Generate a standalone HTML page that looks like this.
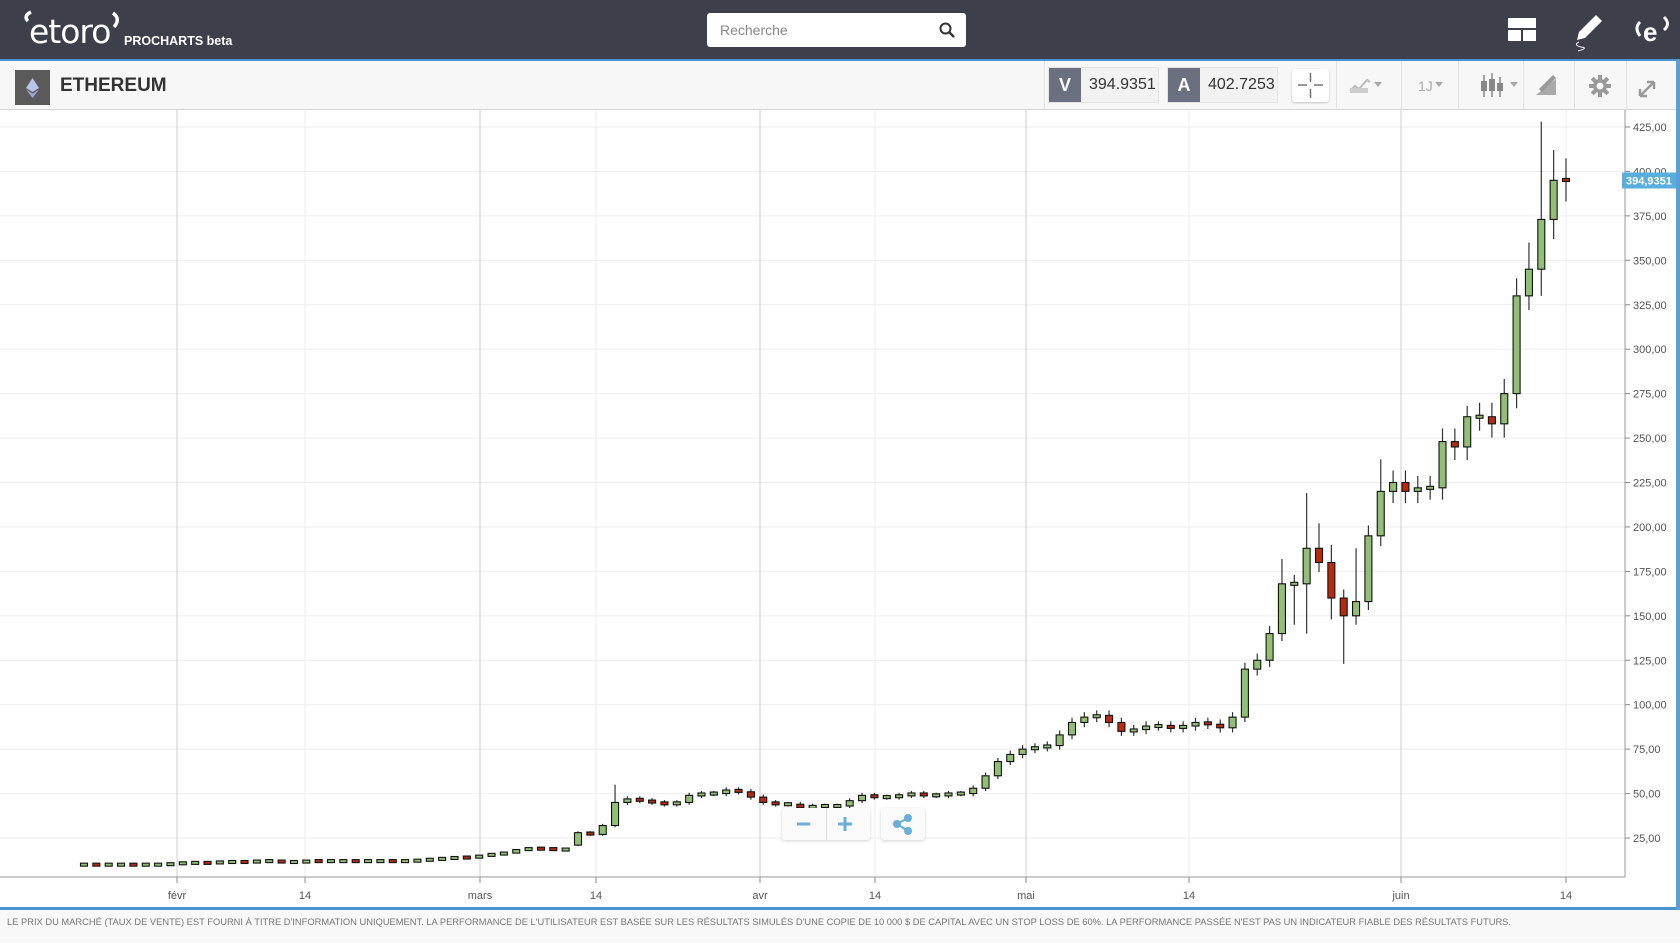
<!DOCTYPE html>
<html><head><meta charset="utf-8">
<style>
*{margin:0;padding:0;box-sizing:border-box}
html,body{width:1680px;height:943px;overflow:hidden;background:#fff;font-family:"Liberation Sans",sans-serif}
#hdr{position:absolute;left:0;top:0;width:1680px;height:60px;background:#3d3f4b}
#blue{position:absolute;left:0;top:59px;width:1680px;height:2px;background:#4a94cf}
#rb{position:absolute;left:1676px;top:60px;width:4px;height:850px;background:#5a9fd6}
#tb{position:absolute;left:0;top:61px;width:1676px;height:49px;background:#f7f7f7;border-bottom:1px solid #d4d4d4}
.search{position:absolute;left:707px;top:13px;width:259px;height:34px;background:#fff;border-radius:3px;font-size:14px;color:#888;padding:9px 13px}
.pbox{position:absolute;top:6px;height:36px;background:#f2f2f2;border:1px solid #e4e4e4;font-size:16px;color:#333}
.pbox b{position:absolute;left:0;top:0;width:32px;height:34px;background:#6b7080;color:#fff;font-size:18px;text-align:center;line-height:34px}
.pbox span{position:absolute;left:40px;top:8px}
.sep{position:absolute;top:0;width:1px;height:49px;background:#e2e2e2}
#foot{position:absolute;left:0;top:907px;width:1676px;height:3px;background:#4a94cf}
#fbg{position:absolute;left:0;top:910px;width:1680px;height:33px;background:#f8f8f8}
</style></head><body>
<div id="hdr">
  <svg width="240" height="60" style="position:absolute;left:0;top:0">
    <text x="29" y="43" font-family="DejaVu Sans" font-size="33" fill="#fff" letter-spacing="-1">etoro</text>
    <path d="M28 21 q-5 -5 3 -9" stroke="#fff" stroke-width="3.5" fill="none"/>
    <path d="M113 13 q8 6 1 14" stroke="#fff" stroke-width="3.5" fill="none"/>
    <text x="124" y="45" font-family="Liberation Sans" font-size="12.5" font-weight="bold" fill="#fff">PROCHARTS beta</text>
  </svg>
  <div class="search">Recherche
    <svg width="16" height="16" style="position:absolute;right:11px;top:9px"><circle cx="6.5" cy="6.5" r="5" stroke="#333" stroke-width="2" fill="none"/><path d="M10 10 L15 15" stroke="#333" stroke-width="2.4"/></svg>
  </div>
  <svg width="180" height="60" style="position:absolute;left:1500px;top:0">
    <rect x="8" y="18" width="28" height="10" fill="#fff"/>
    <rect x="8" y="30" width="13" height="11" fill="#fff"/><rect x="23" y="30" width="13" height="11" fill="#fff"/>
    <path d="M96 15 l6 6 l-17 17 l-8 2 l2 -8 z" fill="#fff"/>
    <path d="M79 42 q-6 3 2 5 q8 1 -3 4" stroke="#fff" stroke-width="1" fill="none"/>
    <text x="143" y="41" font-family="Liberation Sans" font-size="26" font-weight="bold" fill="#fff">e</text>
    <path d="M140 22 q-6 6 0 14" stroke="#fff" stroke-width="3" fill="none"/>
    <path d="M164 17 q7 7 0 13" stroke="#fff" stroke-width="3" fill="none"/>
  </svg>
</div>
<div id="blue"></div>
<div id="tb">
  <div style="position:absolute;left:15px;top:9px;width:35px;height:35px;background:#5a5a5a">
    <svg width="35" height="35"><path d="M17.5 8 L24 18 L17.5 22 L11 18Z" fill="#b9c2e8"/><path d="M17.5 23.5 L24 19.5 L17.5 28 L11 19.5Z" fill="#9aa4d6"/></svg>
  </div>
  <div style="position:absolute;left:60px;top:14px;font-size:19px;font-weight:bold;color:#333">ETHEREUM</div>
  <div class="sep" style="left:1044px"></div>
  <div class="pbox" style="left:1048px;width:111px"><b>V</b><span>394.9351</span></div>
  <div class="pbox" style="left:1167px;width:111px"><b>A</b><span>402.7253</span></div>
  <div style="position:absolute;left:1292px;top:8px;width:37px;height:33px;background:#fff;border-radius:3px;box-shadow:0 1px 2px rgba(0,0,0,.2)">
    <svg width="37" height="33"><path d="M6 16h9M22 16h9M18.5 4v9M18.5 20v9" stroke="#777" stroke-width="1.5"/></svg></div>
  <div class="sep" style="left:1336px"></div><div class="sep" style="left:1401px"></div><div class="sep" style="left:1458px"></div>
  <div class="sep" style="left:1523px"></div><div class="sep" style="left:1574px"></div><div class="sep" style="left:1626px"></div>
  <svg width="340" height="49" style="position:absolute;left:1336px;top:0">
    <path d="M14 30 l5 -5 l4 3 l8 -9 l3 2" stroke="#bbb" stroke-width="2" fill="none"/><rect x="14" y="27" width="18" height="5" fill="#ccc"/>
    <path d="M38 21 h8 l-4 5z" fill="#aaa"/>
    <text x="82" y="30" font-size="14" fill="#aaa" font-family="Liberation Sans">1J</text><path d="M99 21 h8 l-4 5z" fill="#aaa"/>
    <path d="M148 14 v22 M156 12 v24 M164 16 v20" stroke="#888" stroke-width="1.5"/>
    <rect x="145" y="20" width="6" height="10" fill="#888"/><rect x="153" y="18" width="6" height="12" fill="#888"/><rect x="161" y="22" width="6" height="8" fill="#888"/>
    <path d="M174 21 h8 l-4 5z" fill="#aaa"/>
    <path d="M200 34 l20 -16 v16z" fill="#aaa"/><path d="M203 28 l14 -14 l3 3 l-14 14z" fill="#999"/>
    <g transform="translate(264 25)" fill="#999"><circle r="7"/><rect x="-2" y="-11" width="4" height="22"/><rect x="-2" y="-11" width="4" height="22" transform="rotate(45)"/><rect x="-2" y="-11" width="4" height="22" transform="rotate(90)"/><rect x="-2" y="-11" width="4" height="22" transform="rotate(135)"/><circle r="3.5" fill="#f7f7f7"/></g>
    <path d="M304 35 l14 -14 M304 35 v-7 M304 35 h7 M318 21 v7 M318 21 h-7" stroke="#999" stroke-width="2.5" fill="none"/>
  </svg>
</div>
<svg id="ch" width="1676" height="797" style="position:absolute;left:0;top:110px"></svg>
<div id="rb"></div>
<div style="position:absolute;left:782px;top:808px;width:88px;height:32px;background:#fafafa;border-radius:3px;box-shadow:0 1px 3px rgba(0,0,0,.18)">
  <div style="position:absolute;left:44px;top:0;width:1px;height:32px;background:#ddd"></div>
  <svg width="88" height="32"><path d="M15 16h13" stroke="#6aaedb" stroke-width="3"/><path d="M56 16h14M63 9v14" stroke="#6aaedb" stroke-width="3"/></svg>
</div>
<div style="position:absolute;left:881px;top:808px;width:44px;height:32px;background:#fafafa;border-radius:3px;box-shadow:0 1px 3px rgba(0,0,0,.18)">
  <svg width="44" height="32"><circle cx="16" cy="16" r="4" fill="#6aaedb"/><circle cx="27" cy="10" r="4" fill="#6aaedb"/><circle cx="27" cy="23" r="4" fill="#6aaedb"/><path d="M16 16L27 10M16 16L27 23" stroke="#6aaedb" stroke-width="2"/></svg>
</div>
<div id="foot"></div>
<div id="fbg"><svg width="1680" height="33"><text x="7" y="15" font-size="9.5" fill="#777" font-family="Liberation Sans" textLength="1504" lengthAdjust="spacingAndGlyphs">LE PRIX DU MARCHÉ (TAUX DE VENTE) EST FOURNI À TITRE D'INFORMATION UNIQUEMENT. LA PERFORMANCE DE L'UTILISATEUR EST BASÉE SUR LES RÉSULTATS SIMULÉS D'UNE COPIE DE 10 000 $ DE CAPITAL AVEC UN STOP LOSS DE 60%. LA PERFORMANCE PASSÉE N'EST PAS UN INDICATEUR FIABLE DES RÉSULTATS FUTURS.</text></svg></div>
<script>
(function(){
var s=document.getElementById('ch'),h='';
var T=110;function Y(p){return 127-T+(425-p)*1.7775;}
for(var p=25;p<=425;p+=25){var y=Y(p);h+='<line x1="0" x2="1625" y1="'+y+'" y2="'+y+'" stroke="#eeeeee"/>';
h+='<line x1="1625" x2="1630" y1="'+y+'" y2="'+y+'" stroke="#888"/>';
h+='<text x="1633" y="'+(y+4)+'" font-size="11" fill="#555" font-family="Liberation Sans">'+p+',00</text>';}
var maj=[[177,'févr'],[480,'mars'],[760,'avr'],[1026,'mai'],[1401,'juin']],mn=[305,596,875,1189,1566];
maj.forEach(function(m){h+='<line x1="'+m[0]+'" x2="'+m[0]+'" y1="0" y2="767" stroke="#cccccc"/><line x1="'+m[0]+'" x2="'+m[0]+'" y1="767" y2="773" stroke="#888"/><text x="'+m[0]+'" y="789" font-size="11" fill="#555" text-anchor="middle" font-family="Liberation Sans">'+m[1]+'</text>';});
mn.forEach(function(x){h+='<line x1="'+x+'" x2="'+x+'" y1="0" y2="767" stroke="#eeeeee"/><line x1="'+x+'" x2="'+x+'" y1="767" y2="773" stroke="#888"/><text x="'+x+'" y="789" font-size="11" fill="#555" text-anchor="middle" font-family="Liberation Sans">14</text>';});
h+='<line x1="1625" x2="1625" y1="0" y2="767" stroke="#999"/><line x1="0" x2="1625" y1="767" y2="767" stroke="#999"/>';
var c=[10,10,10,10,10,10,10,10.5,11,11,11,11.5,11.5,11.5,12,12,11.5,11.5,12,12,12,12,12,12,12,12,12,12.5,13,13.5,14,14,15,16,16.5,18.5,19,19,18.5,18.5,
28,27,32,45,47,46,45,44,45,49,50,50,52,51,48,45,44,44,42,43,43,43,46,49,48,48,49,50,49,49,50,50,53,60,68,72,75,76,77,83,90,93,94,90,85,86,88,88,87,88,90,89,87,93,120,125,140,168,168,188,180,160,150,158,195,220,225,220,222,222,248,245,262,262,258,275,330,345,373,395,395];
var HI={43:55,97:182,99:219,100:202,101:190,103:188,105:238,112:268,117:360,118:428,119:412},LO={99:140,101:148,102:123,103:145,117:322,118:330,119:362,98:145};
for(var i=0;i<c.length;i++){
 var x=84+i*12.35,o=i?c[i-1]:c[0],cl=c[i];
 if(i==40)o=21;
 if(i==120){o=395.5;cl=394.9;}
 var red=cl<o||(i%3==1&&i<40&&cl==o);
 var top=Y(Math.max(o,cl)),bot=Y(Math.min(o,cl));if(bot-top<3){var m=(top+bot)/2;top=m-1.5;bot=m+1.5;}
 var hi=HI[i]||Math.max(o,cl)*1.03,lo=LO[i]||Math.min(o,cl)*0.97;
 if(i>=40)h+='<line x1="'+x+'" x2="'+x+'" y1="'+Y(hi)+'" y2="'+Y(lo)+'" stroke="#333" stroke-width="1.2"/>';
 h+='<rect x="'+(x-3.5)+'" y="'+top+'" width="7" height="'+(bot-top)+'" fill="'+(red?'#b52b10':'#90bf75')+'" stroke="#111" stroke-width="1.1"/>';
}
var yl=Y(394.9);
h+='<rect x="1622" y="'+(yl-8)+'" width="54" height="16" fill="#5aaede"/><text x="1626" y="'+(yl+4)+'" font-size="11" font-weight="bold" fill="#fff" font-family="Liberation Sans">394,9351</text>';
s.innerHTML=h;
})();
</script>
</body></html>
